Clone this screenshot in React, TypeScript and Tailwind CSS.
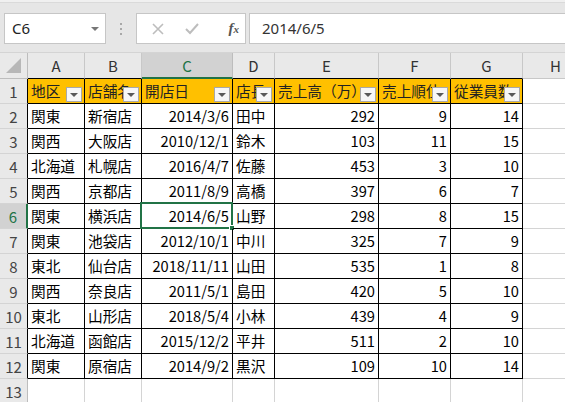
import React from "react";

const jp = "font-['Noto_Sans_CJK_JP',sans-serif]";

const cols = [
  { key: "A", w: "w-[57px]" },
  { key: "B", w: "w-[57px]" },
  { key: "C", w: "w-[91px]" },
  { key: "D", w: "w-[42px]" },
  { key: "E", w: "w-[104px]" },
  { key: "F", w: "w-[72px]" },
  { key: "G", w: "w-[72px]" },
];

const headers = ["地区", "店舗名", "開店日", "店長", "売上高（万）", "売上順位", "従業員数"];

const rows: (string | number)[][] = [
  ["関東", "新宿店", "2014/3/6", "田中", 292, 9, 14],
  ["関西", "大阪店", "2010/12/1", "鈴木", 103, 11, 15],
  ["北海道", "札幌店", "2016/4/7", "佐藤", 453, 3, 10],
  ["関西", "京都店", "2011/8/9", "高橋", 397, 6, 7],
  ["関東", "横浜店", "2014/6/5", "山野", 298, 8, 15],
  ["関東", "池袋店", "2012/10/1", "中川", 325, 7, 9],
  ["東北", "仙台店", "2018/11/11", "山田", 535, 1, 8],
  ["関西", "奈良店", "2011/5/1", "島田", 420, 5, 10],
  ["東北", "山形店", "2018/5/4", "小林", 439, 4, 9],
  ["北海道", "函館店", "2015/12/2", "平井", 511, 2, 10],
  ["関東", "原宿店", "2014/9/2", "黒沢", 109, 10, 14],
];

function FilterButton() {
  return (
    <div className="absolute right-[2px] bottom-[1px] w-[16px] h-[15px] bg-[#f7f7f7] border border-[#a9a9a9] flex items-center justify-center">
      <div className="w-0 h-0 border-l-[4px] border-r-[4px] border-t-[4px] border-l-transparent border-r-transparent border-t-[#5a5a5a]" />
    </div>
  );
}

function RowHeader({ n, selected, table }: { n: number; selected?: boolean; table?: boolean }) {
  return (
    <div
      className={
        "w-[28px] shrink-0 box-border border-b border-b-[#d4d4d4] flex items-center justify-center text-[15px] leading-none " +
        (selected
          ? "bg-[#d2d2d2] text-[#217346] border-r-2 border-r-[#217346]"
          : table
          ? "bg-[#e9e9e9] text-[#444] border-r border-r-black"
          : "bg-[#e9e9e9] text-[#444] border-r border-r-[#bdbdbd]")
      }
    >
      {n}
    </div>
  );
}

export default function App() {
  return (
    <div className={"w-[565px] h-[402px] overflow-hidden bg-white " + jp}>
      {/* formula bar */}
      <div className="h-[52px] bg-[#e6e6e6] flex flex-col">
        <div className="h-[3px] bg-[#f0f0f0] border-b border-[#dadada]" />
        <div className="flex items-start pt-[10px] pl-[4px]">
          <div className="w-[102px] h-[31px] box-border bg-white border border-[#c6c6c6] flex items-center justify-between pl-[7px] pr-[6px]">
            <span className="font-['Noto_Sans',sans-serif] text-[15px] text-[#222]">C6</span>
            <div className="w-0 h-0 border-l-[4px] border-r-[4px] border-t-[4px] border-l-transparent border-r-transparent border-t-[#777]" />
          </div>
          <div className="w-[30px] h-[31px] flex flex-col items-center justify-center gap-[3px]">
            <span className="w-[2px] h-[2px] bg-[#a8a8a8]" />
            <span className="w-[2px] h-[2px] bg-[#a8a8a8]" />
            <span className="w-[2px] h-[2px] bg-[#a8a8a8]" />
          </div>
          <div className="w-[110px] h-[31px] box-border bg-white border border-[#c6c6c6] flex items-center pl-[14px] pr-[6px]">
            <svg width="12" height="12" viewBox="0 0 12 12" className="ml-[1px]">
              <path d="M1 1 L11 11 M11 1 L1 11" stroke="#bdbdbd" strokeWidth="1.6" />
            </svg>
            <svg width="14" height="12" viewBox="0 0 14 12" className="ml-[21px]">
              <path d="M1 6 L5 10 L13 1" stroke="#bdbdbd" strokeWidth="2" fill="none" />
            </svg>
            <span className="ml-auto font-['Liberation_Serif',serif] italic font-bold text-[15px] text-[#555] leading-none">
              f<span className="text-[11px]">x</span>
            </span>
          </div>
          <div className="ml-[3px] flex-1 h-[31px] box-border bg-white border border-r-0 border-[#c6c6c6] flex items-center pl-[12px]">
            <span className="font-['Noto_Sans',sans-serif] text-[15px] text-[#333]">2014/6/5</span>
          </div>
        </div>
      </div>

      {/* column headers */}
      <div className="flex h-[27px] border-t border-[#d4d4d4] box-border">
        <div className="w-[28px] shrink-0 box-border bg-[#e9e9e9] border-r border-b border-[#bdbdbd] flex items-end justify-end p-[4px] pb-[4px]">
          <div className="w-0 h-0 border-l-[16px] border-t-[16px] border-l-transparent border-t-transparent border-b-0 border-r-0 relative">
            <div className="absolute -left-[17px] -top-[16px] w-0 h-0 border-b-[15px] border-l-[15px] border-l-transparent border-b-[#b7b7b7]" />
          </div>
        </div>
        {cols.map((c) =>
          c.key === "C" ? (
            <div
              key={c.key}
              className={c.w + " shrink-0 box-border bg-[#d2d2d2] border-r border-r-[#bdbdbd] border-b-2 border-b-[#217346] flex items-center justify-center text-[15px] text-[#217346] leading-none"}
            >
              {c.key}
            </div>
          ) : (
            <div
              key={c.key}
              className={c.w + " shrink-0 box-border bg-[#e9e9e9] border-r border-r-[#c8c8c8] border-b border-b-black flex items-center justify-center text-[15px] text-[#333] leading-none"}
            >
              {c.key}
            </div>
          )
        )}
        <div className="w-[66px] shrink-0 box-border bg-[#e9e9e9] border-r border-b border-[#c8c8c8] flex items-center justify-center text-[15px] text-[#333] leading-none">
          H
        </div>
      </div>

      {/* row 1 : table header */}
      <div className="flex h-[25px]">
        <RowHeader n={1} table />
        {cols.map((c, i) => (
          <div
            key={c.key}
            className={c.w + " relative shrink-0 box-border bg-[#ffc000] border-r border-b border-black overflow-hidden flex items-center pl-[3px] text-[14.67px] leading-none text-[#222] whitespace-nowrap"}
          >
            {headers[i]}
            <FilterButton />
          </div>
        ))}
        <div className="w-[66px] shrink-0 box-border border-r border-b border-[#d4d4d4]" />
      </div>

      {/* data rows */}
      {rows.map((r, ri) => {
        const n = ri + 2;
        const sel = n === 6;
        return (
          <div key={n} className="flex h-[25px]">
            <RowHeader n={n} selected={sel} table />
            {cols.map((c, ci) => {
              const v = r[ci];
              const right = typeof v === "number" || ci === 2;
              return (
                <div
                  key={c.key}
                  className={
                    c.w +
                    " relative shrink-0 box-border border-r border-b border-black flex items-center text-[14.67px] leading-none text-black whitespace-nowrap " +
                    (right ? "justify-end pr-[3px]" : "pl-[3px]")
                  }
                >
                  {v}
                  {sel && ci === 2 && (
                    <div className="absolute -left-[2px] -top-[2px] -right-[1px] -bottom-[1px] border-2 border-[#217346]">
                      <div className="absolute -right-[4px] -bottom-[4px] w-[6px] h-[6px] bg-[#217346] border border-white" />
                    </div>
                  )}
                </div>
              );
            })}
            <div className="w-[66px] shrink-0 box-border border-r border-b border-[#d4d4d4]" />
          </div>
        );
      })}

      {/* row 13 */}
      <div className="flex h-[25px]">
        <RowHeader n={13} />
        {cols.map((c) => (
          <div key={c.key} className={c.w + " shrink-0 box-border border-r border-b border-[#d4d4d4]"} />
        ))}
        <div className="w-[66px] shrink-0 box-border border-r border-b border-[#d4d4d4]" />
      </div>
    </div>
  );
}
